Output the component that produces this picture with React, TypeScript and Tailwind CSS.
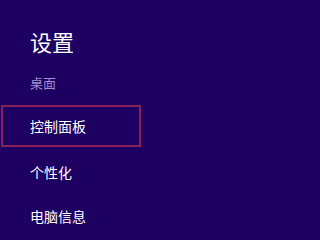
export default function App() {
  const font = { fontFamily: '"Noto Sans CJK SC", "Noto Sans", sans-serif' };
  return (
    <div className="w-full min-w-[288px] h-screen min-h-[232px] overflow-hidden bg-[#1d0062] text-white" style={font}>
      <div className="pt-[30px] pl-[30px] text-[22px] leading-[22px]">设置</div>
      <div className="mt-[24px] pl-[30px] text-[13px] leading-[13px] text-[#9d8fd0]">桌面</div>
      <div className="mt-[16px] ml-[1px] w-[140px] h-[42px] border-2 border-[#8a2056] flex items-center pl-[27px] text-[14px]">
        控制面板
      </div>
      <div className="mt-[3px] h-[44px] flex items-center pl-[30px] text-[14px]">个性化</div>
      <div className="h-[44px] flex items-center pl-[30px] text-[14px]">电脑信息</div>
    </div>
  );
}
